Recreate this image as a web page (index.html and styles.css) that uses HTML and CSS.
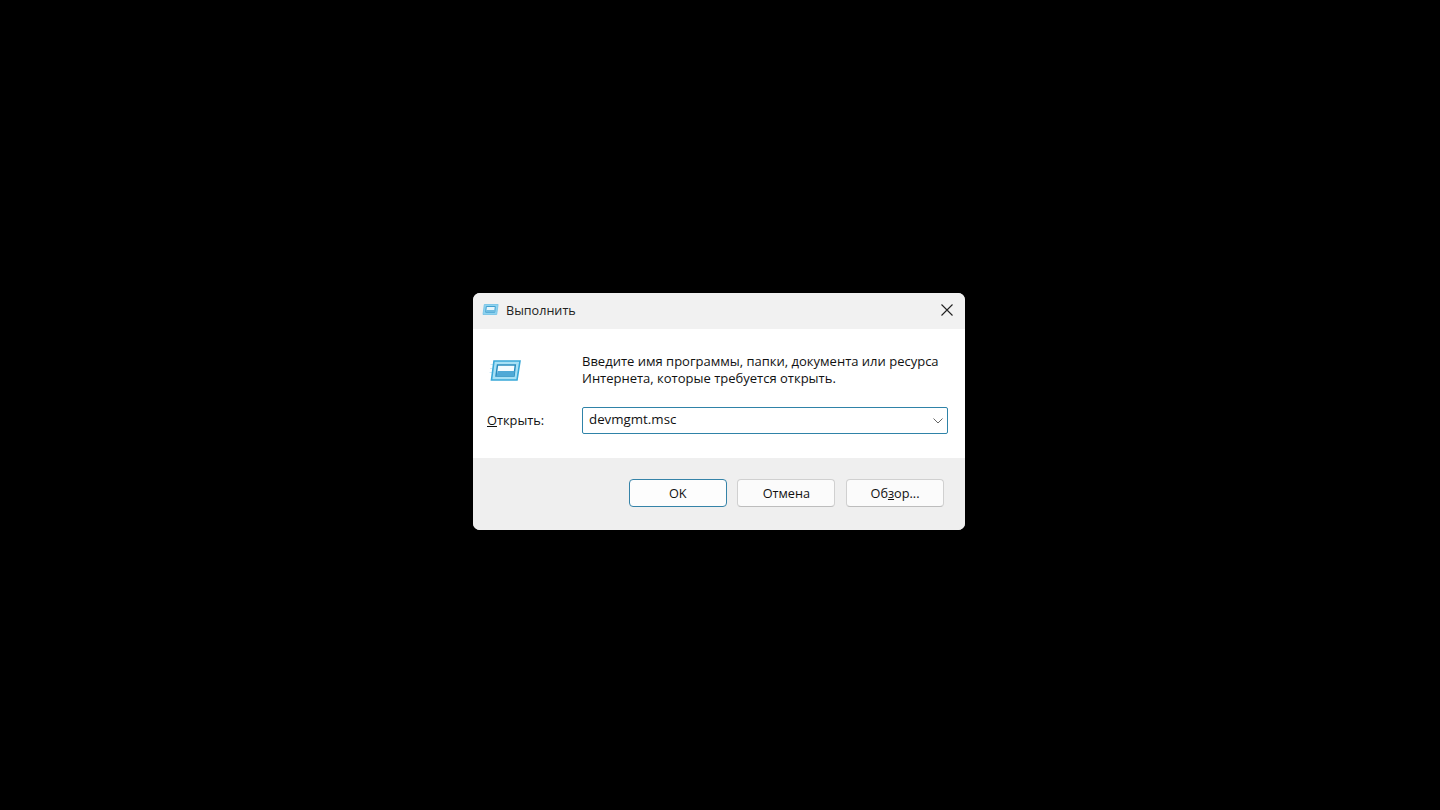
FILE: index.html
```html
<!DOCTYPE html>
<html lang="ru">
<head>
<meta charset="utf-8">
<title>Выполнить</title>
<link rel="stylesheet" href="styles.css">
</head>
<body>
<div class="dialog">
  <header class="titlebar">
    <svg class="title-icon" viewBox="0 0 16 11" aria-hidden="true">
      <path d="M1.800 .5H15.600L14.200 10.500H.5Z" fill="#8fd3ef" stroke="#6fc0e6" stroke-width=".8"/>
      <path d="M3.800 2.500H12.800L12.200 8.300H3.200Z" fill="#e6f5fb" stroke="#3f9fd0" stroke-width="1"/>
      <path d="M3.800 6H12.400L12.100 8.300H3.400Z" fill="#6fbce0"/>
    </svg>
    <span class="title-text">Выполнить</span>
    <svg class="close" viewBox="0 0 12 12" aria-hidden="true">
      <path d="M.5 .5 11.500 11.500M11.500 .5 .5 11.500" stroke="#222" stroke-width="1.100" fill="none"/>
    </svg>
  </header>
  <main class="content">
    <div class="intro">
      <svg class="run-icon" viewBox="0 0 32 21" aria-hidden="true">
        <path d="M1.500 4.500H4M1 8.500H3.400M.6 12.500H3" stroke="#cdeaf7" stroke-width="1"/>
        <path d="M5 1H31L28 20H2.500Z" fill="#a6e0f5" stroke="#38a8d8" stroke-width="1.600"/>
        <path d="M8.500 5H26.300L25 16H7Z" fill="#f4fbfe" stroke="#2a8dbf" stroke-width="1.500"/>
        <path d="M8.600 11H25.600L25 16H7.600Z" fill="#4fa9d6"/>
      </svg>
      <p class="message">Введите имя программы, папки, документа или ресурса<br>Интернета, которые требуется открыть.</p>
    </div>
    <div class="open-row">
      <label class="open-label"><span class="key">О</span>ткрыть:</label>
      <div class="combo">
        <span class="combo-value">devmgmt.msc</span>
        <svg class="chevron" viewBox="0 0 10 6" aria-hidden="true">
          <path d="M.5 .5 5 5 9.500 .5" stroke="#666" stroke-width="1" fill="none"/>
        </svg>
      </div>
    </div>
  </main>
  <footer class="footer">
    <button class="btn btn-default">OK</button>
    <button class="btn">Отмена</button>
    <button class="btn">Об<span class="key">з</span>ор...</button>
  </footer>
</div>
</body>
</html>
```

FILE: styles.css
```css
* { box-sizing: border-box; }
html, body { margin: 0; height: 100%; }
body {
  background: #000;
  font-family: "Open Sans", "Noto Sans", sans-serif;
  font-size: 13px;
  color: #111;
  overflow: hidden;
  padding: 293px 0 0 473px;
}
.dialog {
  width: 492px;
  height: 237px;
  border-radius: 7px;
  overflow: hidden;
  background: #fff;
  display: flex;
  flex-direction: column;
}
.titlebar {
  height: 36px;
  background: #f1f1f1;
  display: flex;
  align-items: center;
  padding: 0 12px 2px 10px;
  flex: none;
}
.title-icon { width: 17px; height: 11px; margin-right: 6px; margin-top: -2px; margin-left: -1px; }
.title-text { flex: 1; color: #222; font-size: 12.6px; padding-top: 1px; padding-left: 1px; }
.close { width: 12px; height: 12px; }
.content {
  flex: 1;
  padding: 24px 16px 0 14px;
}
.intro { display: flex; align-items: flex-start; }
.run-icon { width: 32px; height: 21px; margin-top: 7px; margin-left: 2px; margin-right: 61px; flex: none; }
.message { margin: 0; line-height: 17px; white-space: nowrap; }
.open-row { display: flex; align-items: center; margin-top: 20px; }
.open-label { width: 95px; flex: none; font-size: 12.8px; margin-top: -1px; }
.key { text-decoration: underline; }
.combo {
  width: 366px;
  height: 27px;
  border: 1.5px solid #2f83a8;
  border-radius: 2px;
  display: flex;
  align-items: center;
  justify-content: space-between;
  padding: 0 4px 0 6px;
  background: #fff;
}
.combo-value { font-size: 13.3px; margin-top: -4px; }
.chevron { width: 10px; height: 6px; }
.footer {
  height: 72px;
  flex: none;
  background: #efefef;
  display: flex;
  justify-content: flex-end;
  align-items: flex-start;
  gap: 10.6px;
  padding: 21px 21px 0 0;
}
.btn {
  width: 98px;
  height: 28px;
  border: 1px solid #d0d0d0;
  border-bottom-color: #bdbdbd;
  border-radius: 4px;
  background: #fbfbfb;
  font: inherit;
  font-size: 12.7px;
  color: #111;
  padding: 0;
}
.btn-default { border: 1.5px solid #3583a8; background: #fdfdfd; }
```
